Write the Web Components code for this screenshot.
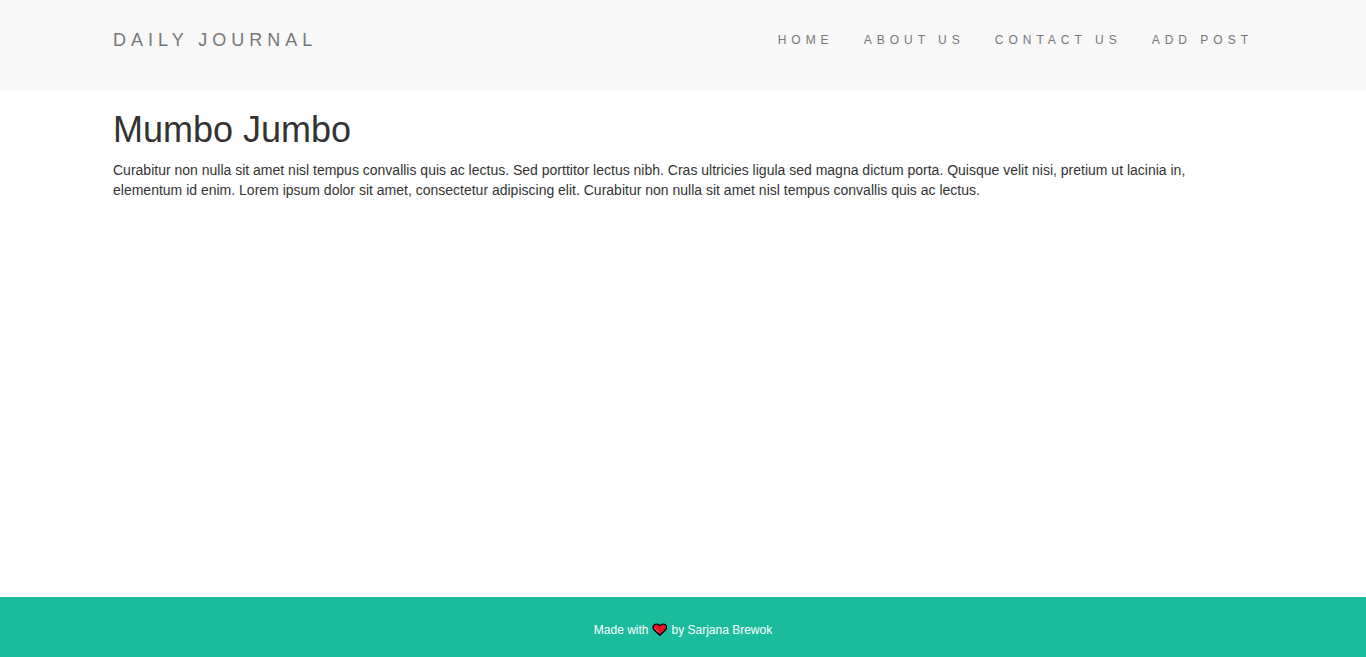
<!DOCTYPE html>
<html lang="en">
<head>
<meta charset="utf-8">
<meta name="viewport" content="width=device-width, initial-scale=1">
<title>Daily Journal</title>
<style>
html, body { margin: 0; }
body { font-family: "Liberation Sans", Arial, sans-serif; font-size: 14px; line-height: 20px; color: #333; background: #fff; }
</style>
</head>
<body>
<journal-page>
  <journal-header slot="header">
    <nav-link href="#home">HOME</nav-link>
    <nav-link href="#about">ABOUT US</nav-link>
    <nav-link href="#contact">CONTACT US</nav-link>
    <nav-link href="#compose">ADD POST</nav-link>
  </journal-header>
  <journal-post heading="Mumbo Jumbo">Curabitur non nulla sit amet nisl tempus convallis quis ac lectus. Sed porttitor lectus nibh. Cras ultricies ligula sed magna dictum porta. Quisque velit nisi, pretium ut lacinia in, elementum id enim. Lorem ipsum dolor sit amet, consectetur adipiscing elit. Curabitur non nulla sit amet nisl tempus convallis quis ac lectus.</journal-post>
  <journal-footer slot="footer"></journal-footer>
</journal-page>
<script>
class Base extends HTMLElement {
  connectedCallback() {
    if (this.shadowRoot) return;
    this.attachShadow({ mode: 'open' }).innerHTML = this.render();
  }
}
customElements.define('journal-page', class extends Base {
  render() {
    return `<style>
      :host { display: flex; flex-direction: column; min-height: 100vh; }
      main { flex: 1; box-sizing: border-box; width: 100%; max-width: 1170px; margin: 0 auto; padding: 0 15px; }
    </style><slot name="header"></slot><main><slot></slot></main><slot name="footer"></slot>`;
  }
});
customElements.define('journal-header', class extends Base {
  render() {
    return `<style>
      :host { display: block; background: #f8f8f8; }
      .bar { display: flex; flex-wrap: wrap; justify-content: space-between; box-sizing: border-box; max-width: 1170px; margin: 0 auto; padding: 30px 15px 40px; }
      .brand { font-size: 18px; line-height: 20px; letter-spacing: 5px; color: #777; text-decoration: none; }
      nav { display: flex; flex-wrap: wrap; gap: 30px; }
    </style><header class="bar"><a class="brand" href="#home">DAILY JOURNAL</a><nav><slot></slot></nav></header>`;
  }
});
customElements.define('nav-link', class extends Base {
  render() {
    return `<style>
      :host { display: block; }
      a { display: block; font-size: 12px; line-height: 20px; letter-spacing: 5px; color: #777; text-decoration: none; }
    </style><a href="${this.getAttribute('href')}"><slot></slot></a>`;
  }
});
customElements.define('journal-post', class extends Base {
  render() {
    return `<style>
      :host { display: block; }
      h1 { margin: 20px 0 10px; font-size: 36px; line-height: 40px; font-weight: 500; }
      p { margin: 0 0 10px; }
    </style><article><h1>${this.getAttribute('heading')}</h1><p><slot></slot></p></article>`;
  }
});
customElements.define('journal-footer', class extends Base {
  render() {
    return `<style>
      :host { display: block; background: #1abc9c; color: #fff; }
      p { display: flex; justify-content: center; align-items: center; gap: 4px; margin: 0; padding: 23px 15px 17px; font-size: 12px; line-height: 20px; }
      svg { width: 15px; height: 14px; }
    </style><footer><p><span>Made with</span><svg viewBox="0 0 15 14" role="img" aria-label="love"><path d="M7.8 12.3 1.9 6.7C.1 4.6 1.3 1 4.3 1c1.6 0 2.8.7 3.5 1.9C8.500 1.700 9.700 1 11.300 1c3 0 4.200 3.600 2.400 5.700Z" fill="#e81224" stroke="#000" stroke-width="1.2" stroke-linejoin="round"/><path d="M3 5.400 6.600 9.200" fill="none" stroke="#f5707c" stroke-width=".9" stroke-linecap="round"/></svg><span>by Sarjana Brewok</span></p></footer>`;
  }
});
</script>
</body>
</html>
